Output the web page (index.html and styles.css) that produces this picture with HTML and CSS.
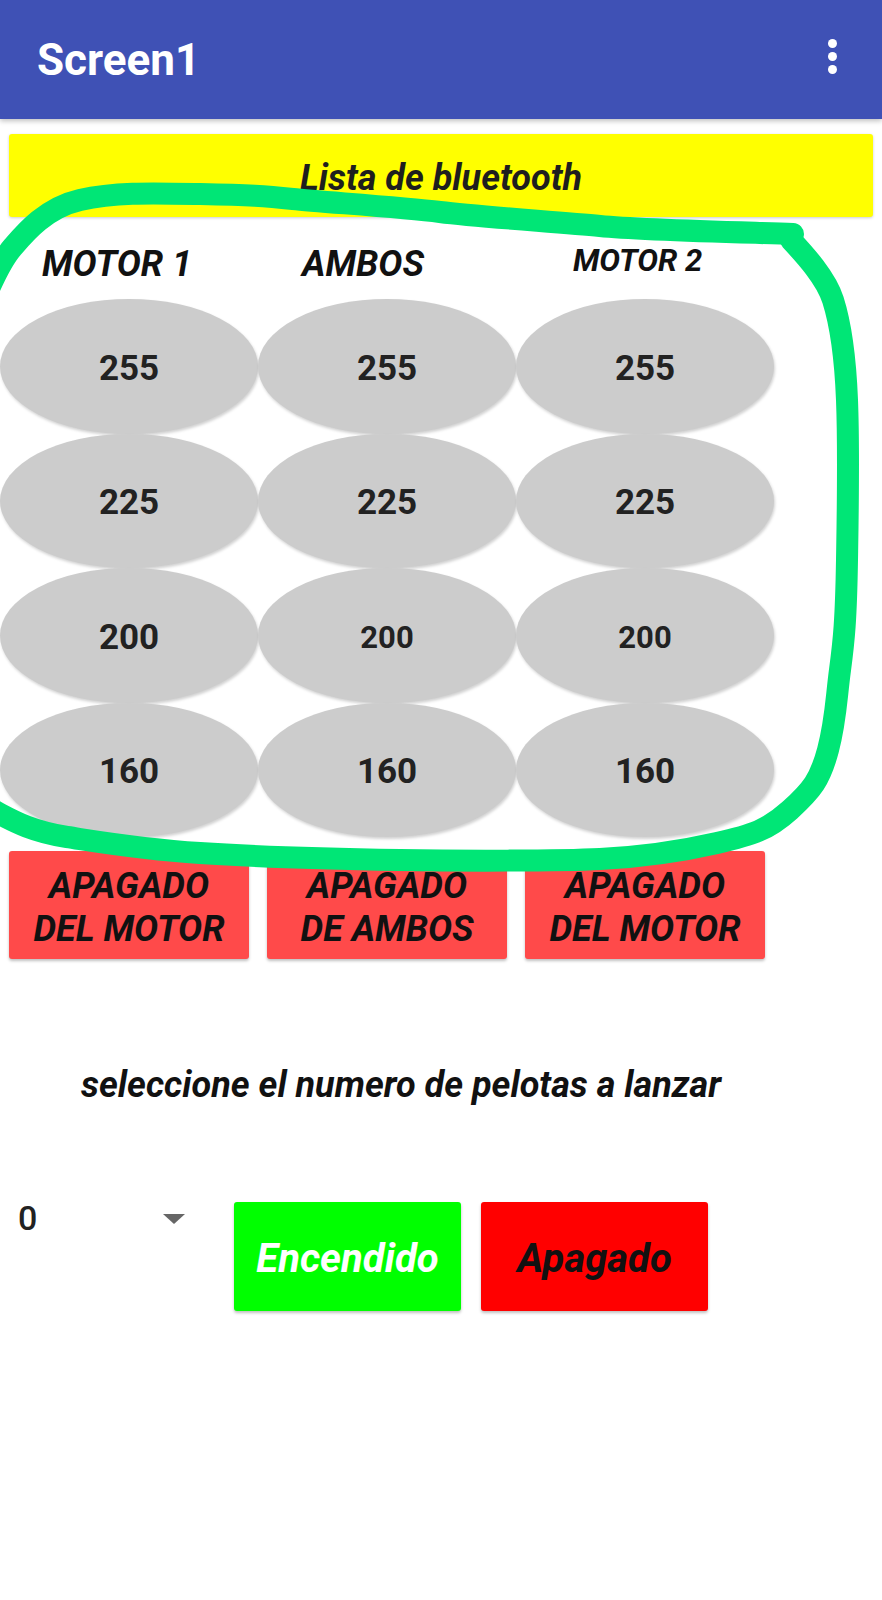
FILE: index.html
```html
<!DOCTYPE html>
<html lang="es">
<head>
<meta charset="utf-8">
<title>Screen1</title>
<link rel="stylesheet" href="styles.css">
</head>
<body>
<header class="appbar">
  <h1 class="title">Screen1</h1>
  <div class="overflow"><span class="dot"></span><span class="dot"></span><span class="dot"></span></div>
</header>
<main class="content">
  <div class="btn-yellow">Lista de bluetooth</div>
  <div class="labels">
    <div class="lbl lbl-m1">MOTOR 1</div>
    <div class="lbl lbl-ambos">AMBOS</div>
    <div class="lbl lbl-m2">MOTOR 2</div>
  </div>
  <div class="grid">
    <div class="oval">255</div><div class="oval">255</div><div class="oval">255</div>
    <div class="oval">225</div><div class="oval">225</div><div class="oval">225</div>
    <div class="oval">200</div><div class="oval small">200</div><div class="oval small">200</div>
    <div class="oval">160</div><div class="oval">160</div><div class="oval">160</div>
  </div>
  <div class="offrow">
    <div class="btn-off-motor">APAGADO<br>DEL MOTOR</div>
    <div class="btn-off-motor">APAGADO<br>DE AMBOS</div>
    <div class="btn-off-motor">APAGADO<br>DEL MOTOR</div>
  </div>
  <p class="prompt">seleccione el numero de pelotas a lanzar</p>
  <div class="controls">
    <div class="spinner"><span class="spin-val">0</span><span class="caret"></span></div>
    <div class="btn-on">Encendido</div>
    <div class="btn-stop">Apagado</div>
  </div>
</main>
<svg class="annotation" width="882" height="900" viewBox="0 0 882 900" aria-hidden="true">
  <path class="stroke" d="M-20,310 C-10,285 0,262 12,248 S45,208 80,200 S150,193 200,194 S265,196 293,199 S400,207 440,212 S560,222 600,226 S730,232 793,234"/>
  <path class="stroke" d="M791,240 C805,255 826,278 833,300 S845,350 847,400 S848,500 847,560 S844,640 840,670 S836,720 828,750 S812,790 790,810 S752,835 717,843 S640,857 600,859 S460,861 400,860 S260,857 200,853 S100,842 67,837 S15,822 0,814 S-15,804 -25,796"/>
</svg>
</body>
</html>
```
FILE: styles.css
```css
html, body {
  margin: 0;
  padding: 0;
  background: #ffffff;
}
body {
  position: relative;
  width: 882px;
  min-height: 1600px;
  font-family: Roboto, "Liberation Sans", Arial, sans-serif;
  color: #1a1a1a;
  overflow: hidden;
}
.appbar {
  height: 119px;
  background: #3f51b5;
  display: flex;
  align-items: center;
  justify-content: space-between;
  padding: 0 0 0 37px;
  box-shadow: 0 2px 5px rgba(0,0,0,0.25);
  position: relative;
  z-index: 1;
}
.title {
  margin: 0;
  color: #ffffff;
  font-size: 44px;
  font-weight: 700;
  letter-spacing: 0;
  line-height: 1;
  margin-top: 0;
}
.overflow {
  width: 100px;
  display: flex;
  flex-direction: column;
  align-items: center;
  gap: 4px;
  margin-top: -6px;
}
.dot {
  width: 9px;
  height: 9px;
  border-radius: 50%;
  background: #ffffff;
}
.content {
  display: flex;
  flex-direction: column;
}
.btn-yellow {
  margin: 15px 9px 0 9px;
  height: 83px;
  box-sizing: border-box;
  padding-top: 5px;
  background: #ffff00;
  border-radius: 3px;
  box-shadow: 0 1px 3px rgba(0,0,0,0.2);
  display: flex;
  align-items: center;
  justify-content: center;
  font-size: 36px;
  font-weight: 700;
  font-style: italic;
  color: #1e1e1e;
}
.labels {
  height: 82px;
  display: grid;
  grid-template-columns: repeat(3, 258px);
  align-items: center;
}
.lbl {
  font-weight: 700;
  font-style: italic;
  color: #111;
  white-space: nowrap;
}
.lbl-m1 {
  font-size: 36px;
  padding-left: 42px;
  margin-top: 11px;
}
.lbl-ambos {
  font-size: 36px;
  padding-left: 44px;
  margin-top: 11px;
}
.lbl-m2 {
  font-size: 31px;
  padding-left: 57px;
  margin-top: 4px;
}
.grid {
  display: grid;
  grid-template-columns: repeat(3, 258px);
  grid-auto-rows: 134.5px;
}
.oval {
  background: #cccccc;
  border-radius: 50%;
  box-shadow: 1px 2px 3px rgba(0,0,0,0.18);
  display: flex;
  align-items: center;
  justify-content: center;
  box-sizing: border-box;
  padding-top: 4px;
  font-size: 35px;
  font-weight: 700;
  color: #222;
}
.oval.small {
  font-size: 31px;
}
.offrow {
  margin-top: 14px;
  display: grid;
  grid-template-columns: repeat(3, 258px);
}
.btn-off-motor {
  margin: 0 9px;
  height: 108px;
  box-sizing: border-box;
  padding-top: 6px;
  background: #ff4a4a;
  border-radius: 3px;
  box-shadow: 0 2px 3px rgba(0,0,0,0.25);
  display: flex;
  align-items: center;
  justify-content: center;
  text-align: center;
  font-size: 36px;
  line-height: 43px;
  font-weight: 700;
  font-style: italic;
  color: #111;
}
.prompt {
  margin: 106px 0 0 0;
  padding-left: 81px;
  font-size: 36px;
  line-height: 40px;
  font-weight: 700;
  font-style: italic;
  color: #111;
}
.controls {
  margin-top: 97px;
  display: flex;
  align-items: flex-start;
}
.spinner {
  width: 216px;
  margin-right: 18px;
  height: 32px;
  display: flex;
  align-items: center;
  padding-left: 18px;
  box-sizing: border-box;
}
.spin-val {
  font-size: 34px;
  font-weight: 500;
  color: #222;
  line-height: 32px;
  width: 145px;
}
.caret {
  width: 0;
  height: 0;
  border-left: 11px solid transparent;
  border-right: 11px solid transparent;
  border-top: 10px solid #666;
  margin-top: 2px;
}
.btn-on, .btn-stop {
  width: 227px;
  height: 109px;
  box-sizing: border-box;
  padding-top: 3px;
  border-radius: 3px;
  box-shadow: 0 2px 3px rgba(0,0,0,0.25);
  display: flex;
  align-items: center;
  justify-content: center;
  font-size: 40px;
  font-weight: 700;
  font-style: italic;
}
.btn-on {
  background: #00ff00;
  color: #ffffff;
  margin-right: 20px;
}
.btn-stop {
  background: #ff0000;
  color: #111;
}
.annotation {
  position: absolute;
  left: 0;
  top: 0;
  pointer-events: none;
  z-index: 2;
}
.stroke {
  fill: none;
  stroke: #00e676;
  stroke-width: 22;
  stroke-linecap: round;
  stroke-linejoin: round;
}
```
